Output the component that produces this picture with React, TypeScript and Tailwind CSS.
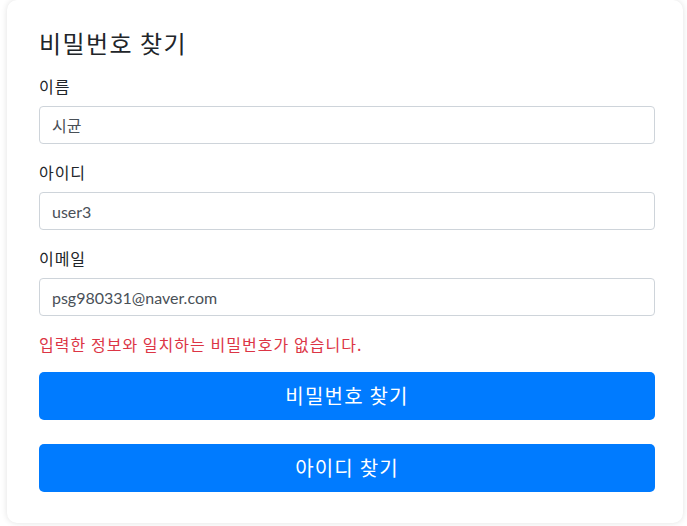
import React from "react";

const font = { fontFamily: '"Noto Sans CJK KR", "Noto Sans", sans-serif' };
const inputFont = { fontFamily: 'Lato, "Noto Sans CJK KR", sans-serif' };

function Field({ label, value }: { label: string; value: string }) {
  return (
    <div className="flex flex-col">
      <label className="text-[16px] leading-[24px] tracking-[0.06em] text-[#212529] mb-[8px]">{label}</label>
      <input
        readOnly
        value={value}
        className="h-[38px] w-full rounded-[4px] border border-[#ced4da] bg-white px-[12px] text-[16px] text-[#495057] outline-none"
        style={inputFont}
      />
    </div>
  );
}

export default function App() {
  return (
    <div className="h-[526px] w-[687px] bg-white pl-[7px] pr-[4px]" style={font}>
      <div className="h-[523px] rounded-[10px] bg-white shadow-[0_0_6px_rgba(0,0,0,0.12)] pl-[32px] pr-[28px] pt-[28px] pb-[31px] flex flex-col">
        <h3 className="text-[24px] leading-[29px] tracking-[0.06em] text-[#212529] font-normal mb-[17px]">비밀번호 찾기</h3>
        <div className="flex flex-col gap-[16px]">
          <Field label="이름" value="시균" />
          <Field label="아이디" value="user3" />
          <Field label="이메일" value="psg980331@naver.com" />
          <p className="text-[16px] leading-[24px] tracking-[0.065em] text-[#dc3545]">입력한 정보와 일치하는 비밀번호가 없습니다.</p>
        </div>
        <button className="mt-[16px] h-[48px] w-full rounded-[5px] bg-[#007bff] text-[20px] tracking-[0.06em] text-white">비밀번호 찾기</button>
        <button className="mt-[24px] h-[48px] w-full rounded-[5px] bg-[#007bff] text-[20px] tracking-[0.06em] text-white">아이디 찾기</button>
      </div>
    </div>
  );
}
